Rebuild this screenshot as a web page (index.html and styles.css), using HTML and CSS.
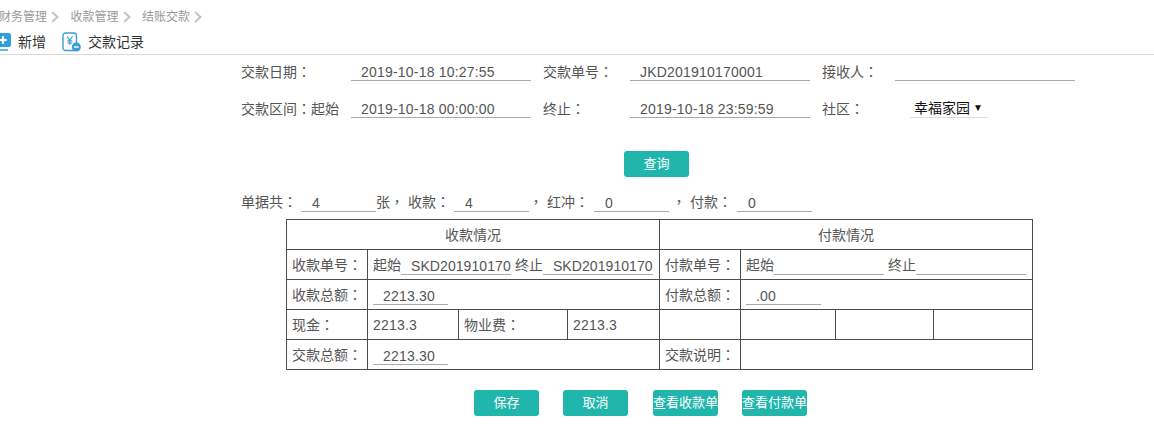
FILE: index.html
```html
<!DOCTYPE html>
<html lang="zh-CN">
<head>
<meta charset="utf-8">
<title>结账交款</title>
<link rel="stylesheet" href="styles.css">
</head>
<body>
<header class="head">
  <nav class="crumbs">
    <span class="crumb">财务管理<svg class="chev" viewBox="0 0 8 12"><path d="M1 1l5.500 5-5.500 5"/></svg></span>
    <span class="crumb">收款管理<svg class="chev" viewBox="0 0 8 12"><path d="M1 1l5.500 5-5.500 5"/></svg></span>
    <span class="crumb">结账交款<svg class="chev" viewBox="0 0 8 12"><path d="M1 1l5.500 5-5.500 5"/></svg></span>
  </nav>
  <div class="tools">
    <span class="tool tool-add">
      <svg class="ico-add" viewBox="0 0 16 18"><path d="M2 14v1.500a1.500 1.500 0 0 0 1.500 1.500H13" fill="none" stroke="#2f9fdc" stroke-width="1.500"/><rect x="0" y="0" width="16" height="14" rx="2.500" fill="#2f9fdc"/><path d="M8 3.200v7.600M4.200 7h7.600" stroke="#fff" stroke-width="2.200"/></svg>新增
    </span>
    <span class="tool tool-rec">
      <svg class="ico-rec" viewBox="0 0 19 20"><rect x="1" y="1" width="13.500" height="17.500" rx="2.500" fill="#fff" stroke="#3a9fd8" stroke-width="1.400"/><path d="M5 4.500l2.800 3.500 2.800-3.500M7.800 8v5M5.300 8.800h5M5.300 11h5" fill="none" stroke="#3a9fd8" stroke-width="1.200"/><circle cx="14.300" cy="15" r="4.500" fill="#3a9fd8"/><path d="M12 15h4.600" stroke="#fff" stroke-width="1.400"/></svg>交款记录
    </span>
  </div>
</header>

<main class="main">
  <section class="form">
    <span>交款日期：</span><span class="field">2019-10-18 10:27:55</span>
    <span>交款单号：</span><span class="field">JKD201910170001</span>
    <span>接收人：</span><span class="field"></span>
    <span>交款区间：起始</span><span class="field">2019-10-18 00:00:00</span>
    <span>终止：</span><span class="field">2019-10-18 23:59:59</span>
    <span>社区：</span><span class="select">幸福家园<i class="arrow">▼</i></span>
  </section>

  <div class="query"><button class="btn">查询</button></div>

  <section class="summary">
    <span class="s-a">单据共：</span><span class="field short">4</span>
    <span class="s-b">张， 收款：</span><span class="field short">4</span>
    <span class="s-c">， 红冲：</span><span class="field short">0</span>
    <span class="s-d">， 付款：</span><span class="field short">0</span>
  </section>

  <table class="grid">
    <colgroup>
      <col class="c1"><col class="c2"><col class="c3"><col class="c4">
      <col class="c5"><col class="c6"><col class="c7"><col class="c8">
    </colgroup>
    <tr><th colspan="4">收款情况</th><th colspan="4">付款情况</th></tr>
    <tr>
      <td>收款单号：</td>
      <td colspan="3">起始<span class="field wide">SKD201910170</span> 终止<span class="field wide">SKD201910170</span></td>
      <td>付款单号：</td>
      <td colspan="3">起始<span class="field wide"></span> 终止<span class="field wide"></span></td>
    </tr>
    <tr>
      <td>收款总额：</td><td colspan="3"><span class="field short">2213.30</span></td>
      <td>付款总额：</td><td colspan="3"><span class="field short">.00</span></td>
    </tr>
    <tr>
      <td>现金：</td><td class="num">2213.3</td><td>物业费：</td><td class="num">2213.3</td>
      <td></td><td></td><td></td><td></td>
    </tr>
    <tr>
      <td>交款总额：</td><td colspan="3"><span class="field short">2213.30</span></td>
      <td>交款说明：</td><td colspan="3"></td>
    </tr>
  </table>

  <div class="actions">
    <button class="btn">保存</button>
    <button class="btn">取消</button>
    <button class="btn">查看收款单</button>
    <button class="btn">查看付款单</button>
  </div>
</main>
</body>
</html>
```
FILE: styles.css
```css
* { box-sizing: border-box; }
html, body { margin: 0; padding: 0; }
body {
  width: 1154px;
  height: 445px;
  overflow: hidden;
  background: #fff;
  color: #555;
  font: 14px/20px "Liberation Sans", "Noto Sans CJK TC", sans-serif;
  font-feature-settings: "locl" 0;
}
.head {
  height: 55px;
  border-bottom: 1px solid #d8d8d8;
  overflow: hidden;
}
.crumbs {
  display: flex;
  height: 32px;
  padding-top: 1px;
  align-items: center;
  margin-left: -1px;
  color: #999;
  font-size: 12px;
}
.crumb { display: flex; align-items: center; width: 71.500px; }
.chev { width: 8px; height: 12px; margin-left: 4px; fill: none; stroke: #c4c4c4; stroke-width: 2; }
.tools { display: flex; align-items: center; height: 20px; color: #333; }
.tool { display: flex; align-items: center; }
.tool-add { margin-left: -5px; }
.ico-add { width: 16px; height: 18px; margin-right: 7px; }
.tool-rec { margin-left: 16px; }
.ico-rec { width: 19px; height: 20px; margin-right: 7px; }

.main { display: block; }
.form {
  display: grid;
  grid-template-columns: 98px 180px 75px 180px 61px 180px;
  grid-auto-rows: 16px;
  column-gap: 12px;
  row-gap: 21px;
  margin: 9px 0 0 241px;
  width: 880px;
  white-space: nowrap;
}
.form > span { line-height: 16px; }
.field {
  display: inline-block;
  border-bottom: 1px solid #aaa;
  padding-left: 10px;
  line-height: 16px;
  height: 17px;
  vertical-align: bottom;
  white-space: nowrap;
  letter-spacing: .2px;
}
.num { letter-spacing: .2px; }
.form > .select {
  display: flex;
  justify-content: space-between;
  align-items: center;
  margin: -1px 0 0 15px;
  width: 78px;
  height: 18px;
  padding: 0 5px 2px 4px;
  border-bottom: 1px solid #ddd;
  color: #111;
}
.arrow { font-style: normal; font-size: 10px; }
.query { display: flex; margin: 34px 0 0 624px; }
.btn {
  width: 65px;
  height: 26px;
  padding: 0;
  border: 0;
  border-radius: 3px;
  background: #20b6ac;
  color: #fff;
  font: 400 13px/26px "Liberation Sans", "Noto Sans CJK TC", sans-serif;
  font-feature-settings: "locl" 0;
  white-space: nowrap;
}
.summary {
  display: flex;
  align-items: flex-end;
  height: 17px;
  margin: 18px 0 0 241px;
  white-space: nowrap;
}
.summary .field { padding-left: 11px; color: #555; }
.short { width: 75px; }
.s-a { width: 60px; }
.s-b { width: 78px; }
.s-c { width: 65px; }
.s-d { width: 68px; padding-left: 3px; }

.grid {
  border-collapse: collapse;
  table-layout: fixed;
  width: 747px;
  margin: 7px 0 0 286px;
  height: 150px;
}
.grid th, .grid td {
  border: 1px solid #4d4d4d;
  height: 30px;
  padding: 0 5px;
  font-weight: 400;
  white-space: nowrap;
  overflow: hidden;
}
.c1, .c5 { width: 81px; }
.c2 { width: 91px; }
.c3 { width: 109px; }
.c4 { width: 92px; }
.c6 { width: 95px; }
.c7 { width: 98px; }
.c8 { width: 99px; }
.grid .wide { width: 110px; letter-spacing: .08px; }
.actions {
  display: flex;
  margin: 20px 0 0 474px;
  gap: 24px;
}
.actions .btn:nth-child(3) { margin-left: 1px; }
```
